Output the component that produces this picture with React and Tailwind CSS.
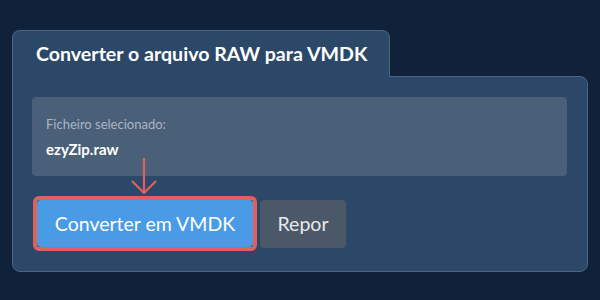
export default function App() {
  return (
    <div className="min-h-[300px] w-[600px] bg-[#0f2239] px-3 pt-[30px]" style={{ fontFamily: 'Lato, "Noto Sans", sans-serif' }}>
      {/* Tab */}
      <div className="relative z-10 -mb-px flex h-[47px] w-[378px] items-center rounded-t-lg border border-b-0 border-[#4b6584] bg-[#2c4868] pl-[23px]">
        <h1 className="text-[19.6px] font-bold text-white">Converter o arquivo RAW para VMDK</h1>
      </div>

      {/* Body */}
      <div className="h-[196px] w-[576px] rounded-b-lg rounded-tr-lg border border-[#4b6584] bg-[#2c4868] pl-[19px] pr-[20px] pt-[20px]">
        <div className="flex h-[79px] flex-col justify-center rounded bg-[#4a5f78] px-[14px]">
          <p className="text-[13px] leading-5 text-[#aab6c4]">Ficheiro selecionado:</p>
          <p className="mt-[5px] text-[15px] font-bold leading-5 text-white">ezyZip.raw</p>
        </div>

        <div className="relative mt-[20px] flex items-center">
          {/* Arrow */}
          <svg className="absolute left-[99px] top-[-38px]" width="26" height="38" viewBox="0 0 26 38" fill="none">
            <path d="M13 0 V35 M1 23 L13 35 L25 23" stroke="#e0605c" strokeWidth="2.2" />
          </svg>
          <div className="ml-px rounded-md border-4 border-[#e0605c]">
            <button className="h-[47px] w-[216px] rounded-sm bg-[#4a9be6] text-[19.5px] text-white">Converter em VMDK</button>
          </div>
          <button className="ml-[3px] h-[48px] w-[86px] rounded bg-[#4a5868] text-[19.5px] text-[#e8e8e8]">Repor</button>
        </div>
      </div>
    </div>
  );
}
